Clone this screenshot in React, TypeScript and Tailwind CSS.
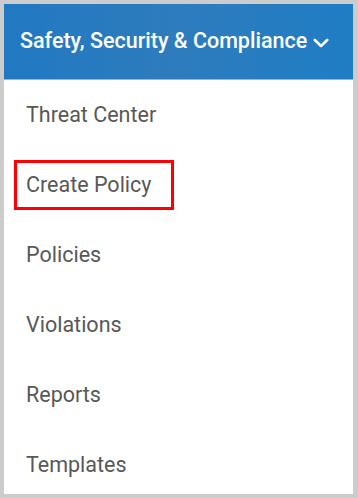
import React from 'react';

const items = ['Threat Center', 'Create Policy', 'Policies', 'Violations', 'Reports', 'Templates'];

export default function App() {
    return (
        <div className="w-[358px] h-[498px] bg-[#cccccc] p-[4px] pr-[5px] overflow-hidden font-['Roboto',sans-serif]">
            <div className="h-full bg-white flex flex-col overflow-hidden">
                {/* Header */}
                <div className="h-[76px] shrink-0 bg-gradient-to-r from-[#2179c2] via-[#2d7cbd] to-[#1f7dc4] border-b border-[#8fb8dc] flex items-center pl-[16px] text-white">
                    <span className="text-[21.5px] font-medium">Safety, Security &amp; Compliance</span>
                    <svg width="16" height="10" viewBox="0 0 16 10" className="ml-[6px] mt-[3px]" fill="none" stroke="currentColor" strokeWidth="2.6" strokeLinecap="round" strokeLinejoin="round">
                        <path d="M1.8 2L8 8L14.2 2" />
                    </svg>
                </div>

                {/* Menu items */}
                <nav className="flex flex-col">
                    {items.map((item) => (
                        <div key={item} className="h-[70px] shrink-0 flex items-center pl-[10px]">
                            {item === 'Create Policy' ? (
                                <span className="w-[160px] h-[50px] border-[3px] border-[#ff0000] flex items-center pl-[9px] text-[21.5px] text-[#585858]">
                                    {item}
                                </span>
                            ) : (
                                <span className="pl-[12px] text-[21.5px] text-[#585858]">{item}</span>
                            )}
                        </div>
                    ))}
                </nav>
            </div>
        </div>
    );
}
